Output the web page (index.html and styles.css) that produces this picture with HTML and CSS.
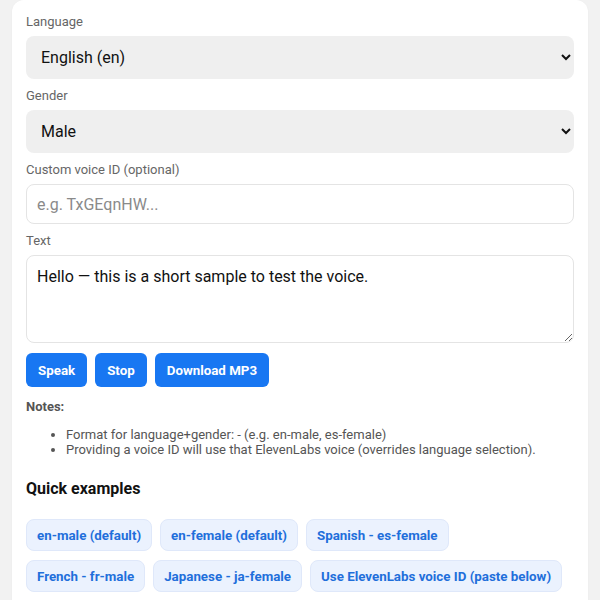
FILE: index.html
```html
<!DOCTYPE html>
<html lang="en">
<head>
<meta charset="utf-8">
<title>Voice test</title>
<link rel="stylesheet" href="styles.css">
</head>
<body>
<main class="card">
  <div class="field">
    <label class="label" for="lang">Language</label>
    <select id="lang" class="select">
      <option>English (en)</option>
      <option>Spanish (es)</option>
      <option>French (fr)</option>
      <option>Japanese (ja)</option>
    </select>
  </div>
  <div class="field">
    <label class="label" for="gender">Gender</label>
    <select id="gender" class="select">
      <option>Male</option>
      <option>Female</option>
    </select>
  </div>
  <div class="field">
    <label class="label" for="voice">Custom voice ID (optional)</label>
    <input id="voice" class="input" type="text" placeholder="e.g. TxGEqnHW...">
  </div>
  <div class="field">
    <label class="label" for="text">Text</label>
    <textarea id="text" class="textarea">Hello — this is a short sample to test the voice.</textarea>
  </div>
  <div class="actions">
    <button class="btn">Speak</button>
    <button class="btn">Stop</button>
    <button class="btn">Download MP3</button>
  </div>
  <div class="notes">
    <p class="notes-title">Notes:</p>
    <ul class="notes-list">
      <li>Format for language+gender: - (e.g. en-male, es-female)</li>
      <li>Providing a voice ID will use that ElevenLabs voice (overrides language selection).</li>
    </ul>
  </div>
  <h3 class="section-title">Quick examples</h3>
  <div class="chips">
    <button class="chip">en-male (default)</button>
    <button class="chip">en-female (default)</button>
    <button class="chip">Spanish - es-female</button>
    <button class="chip">French - fr-male</button>
    <button class="chip">Japanese - ja-female</button>
    <button class="chip">Use ElevenLabs voice ID (paste below)</button>
  </div>
</main>
</body>
</html>
```
FILE: styles.css
```css
* { box-sizing: border-box; }
html, body { margin: 0; padding: 0; }
body {
  background: #f2f2f2;
  font-family: Roboto, "Liberation Sans", Arial, sans-serif;
  color: #111;
  padding: 0 12px 20px;
}
.card {
  background: #fff;
  border-radius: 12px;
  padding: 13px 14px 20px;
  box-shadow: 0 1px 3px rgba(0,0,0,0.04);
}
.field {
  display: flex;
  flex-direction: column;
  margin-bottom: 8px;
}
.label {
  font-size: 13px;
  line-height: 18px;
  color: #666;
  margin-bottom: 5px;
}
.select {
  height: 43px;
  width: 100%;
  font-family: inherit;
  font-size: 16px;
  color: #111;
  background-color: #efefef;
  border: none;
  border-radius: 8px;
  padding: 0 11px;
}
.input {
  height: 40px;
  width: 100%;
  font-family: inherit;
  font-size: 16px;
  color: #111;
  background: #fff;
  border: 1px solid #e4e4e4;
  border-radius: 8px;
  padding: 0 10px;
}
.input::placeholder { color: #8a8a8a; }
.textarea {
  height: 88px;
  width: 100%;
  font-family: inherit;
  font-size: 16px;
  line-height: 20px;
  color: #111;
  background: #fff;
  border: 1px solid #e4e4e4;
  border-radius: 8px;
  padding: 11px 10px;
  resize: vertical;
}
.actions {
  display: flex;
  gap: 8px;
  margin-top: 10px;
}
.btn {
  height: 34px;
  padding: 0 12px;
  border: none;
  border-radius: 6px;
  background: #1877f2;
  color: #fff;
  font-family: inherit;
  font-size: 13.333px;
  font-weight: 700;
}
.notes {
  margin-top: 12px;
  color: #555;
  font-size: 13px;
}
.notes-title {
  margin: 0;
  font-weight: 700;
}
.notes-list {
  margin: 13px 0 0;
  padding-left: 40px;
}
.section-title {
  margin: 22px 0 21px;
  font-size: 16px;
  font-weight: 700;
  color: #111;
}
.chips {
  display: flex;
  flex-wrap: wrap;
  gap: 9px 8px;
}
.chip {
  height: 32px;
  padding: 0 10px;
  border: 1px solid #dfe8fa;
  border-radius: 8px;
  background: #ebf2fe;
  color: #1f6fdb;
  font-family: inherit;
  font-size: 13.333px;
  font-weight: 700;
}
```
